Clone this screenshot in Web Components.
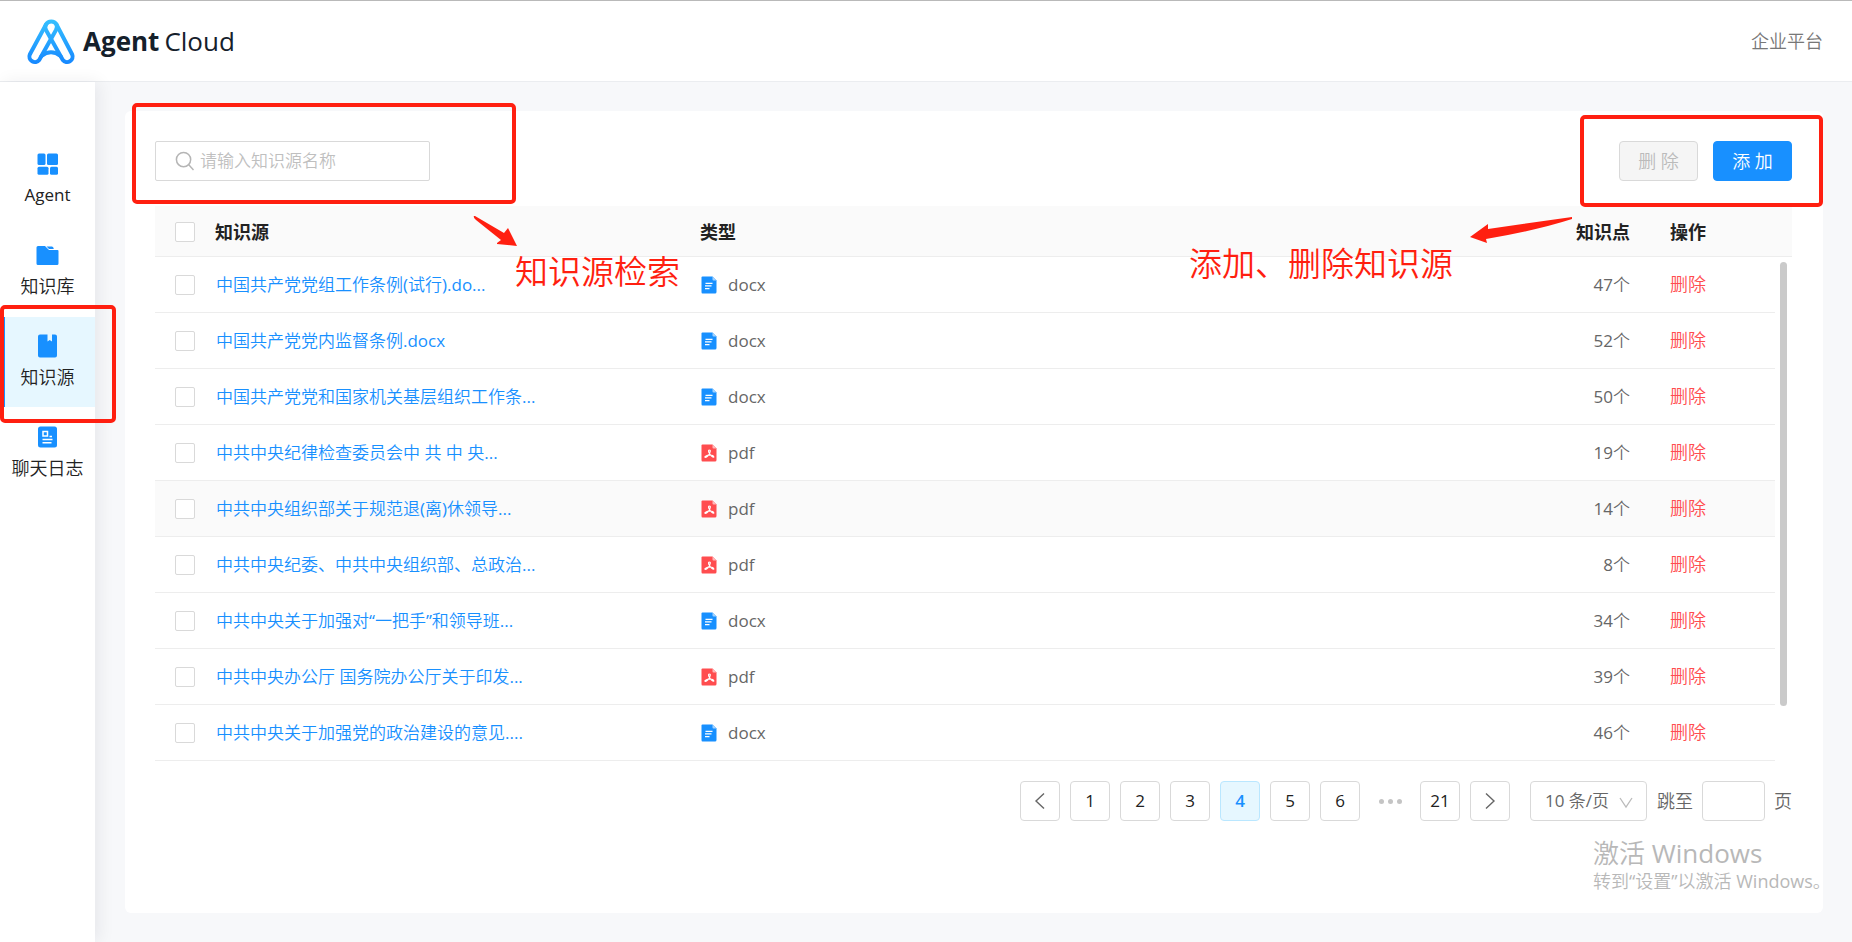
<!DOCTYPE html>
<html lang="zh-CN">
<head>
<meta charset="utf-8">
<title>Agent Cloud</title>
<style>
html, body { height: 100%; margin: 0; }
body { background: #f7f8fa; color: #222; font: 17px/24px "Open Sans", "Noto Sans CJK SC DemiLight", "Noto Sans CJK SC", sans-serif; }
</style>
</head>
<body>
<cloud-app></cloud-app>
<script>
const icons = {
  agent: '<svg viewBox="0 0 24 24"><g fill="#1890ff"><rect x="1.500" y="1.500" width="8" height="11.500" rx="1.500"/><rect x="11" y="1.500" width="11" height="11.500" rx="1.500"/><rect x="1.500" y="14.800" width="11" height="8" rx="1.500"/><rect x="14" y="14.800" width="8" height="8" rx="1.500"/></g></svg>',
  library: '<svg viewBox="0 0 24 24"><path fill="#1890ff" d="M2 3H9L13 7H21.500Q22.500 7 22.500 8V20.500Q22.500 22 21 22H2Q.5 22 .5 20.500V4.500Q.5 3 2 3Z"/><path fill="#1890ff" d="M10.500 3.500H16Q17.500 3.500 17.800 6H13Z"/></svg>',
  source: '<svg viewBox="0 0 24 24"><path fill="#1890ff" d="M4 .5H11.500V7.500L13.700 6L16 7.500V.5H19Q21 .5 21 2.500V21.500Q21 23.500 19 23.500H4Q2 23.500 2 21.500V2.500Q2 .5 4 .5Z"/></svg>',
  log: '<svg viewBox="0 0 24 24"><rect x="2" y="1.500" width="19" height="21" rx="2.500" fill="#1890ff"/><rect x="7" y="6.500" width="4.500" height="4.500" fill="none" stroke="#fff" stroke-width="1.500"/><path stroke="#fff" stroke-width="1.500" d="M13.500 11.500H16M6.500 14.500H16.500M6.500 17.800H15.500"/></svg>',
  docx: '<svg viewBox="0 0 16 18"><path fill="#1890ff" d="M1.500 .5H11.500L15.500 4.500V16Q15.500 17.500 14 17.500H1.500Q.5 17.500 .5 16V1.500Q.5 .5 1.500 .5Z"/><path fill="#a3d3ff" d="M11.500 .5L15.500 4.500H12.500Q11.500 4.500 11.500 3.500Z"/><path stroke="#fff" stroke-width="1.200" d="M4.500 7.300H11.500M4 9.900H10.500M4 12.600H8.500"/></svg>',
  pdf: '<svg viewBox="0 0 16 18"><path fill="#ff4d4f" d="M1.500 .5H11.500L15.500 4.500V16Q15.500 17.500 14 17.500H1.500Q.5 17.500 .5 16V1.500Q.5 .5 1.500 .5Z"/><path fill="#ffb8b9" d="M11.500 .5L15.500 4.500H12.500Q11.500 4.500 11.500 3.500Z"/><path fill="none" stroke="#fff" stroke-width="1.200" d="M8.500 9.500C7 7 7.500 5.800 8.500 6C10 6.200 9 8.500 8.300 10C7.300 12 5 13.700 4 13.200C3.300 12.500 6 11.300 8 11.200C10.500 11 12.500 12 12.800 13C12 13.500 9.700 12 8.500 9.500Z"/></svg>',
  search: '<svg viewBox="0 0 20 20" fill="none" stroke="#b5b5b5" stroke-width="1.600"><circle cx="9" cy="8.500" r="7.500"/><path d="M14.500 14L19.500 19.500"/></svg>',
  prev: '<svg viewBox="0 0 16 16" fill="none" stroke="#666" stroke-width="1.400"><path d="M12 .5L4 8L12 15.500"/></svg>',
  next: '<svg viewBox="0 0 16 16" fill="none" stroke="#666" stroke-width="1.400"><path d="M4 .5L12 8L4 15.500"/></svg>',
  down: '<svg viewBox="0 0 16 16" fill="none" stroke="#bbb" stroke-width="1.300"><path d="M2 4L8 13L14 4"/></svg>'
};

class Base extends HTMLElement {
  connectedCallback() {
    if (this.shadowRoot) return;
    this.attachShadow({ mode: 'open' }).innerHTML =
      `<style>*{box-sizing:border-box}svg{display:block}a{text-decoration:none}button,input,select{font:inherit;margin:0}${this.css()}</style>${this.html()}`;
  }
}

customElements.define('cloud-header', class extends Base {
  css() { return `
    :host{display:flex;align-items:center;justify-content:space-between;box-sizing:border-box;height:82px;padding:0 29px 0 26px;background:#fff;border-top:1px solid #b9b9b9;border-bottom:1px solid #ebedf0}
    .brand{display:flex;align-items:center;gap:7px;color:#15202b;font-size:26px;line-height:40px}
    .brand svg{width:50px;height:48px}
    .name{display:flex;gap:5px}
    .portal{color:#777;font-size:18px}`; }
  html() { return `
    <a class="brand" href="#"><svg viewBox="0 0 50 48" fill="none" stroke="url(#g)" stroke-width="4" stroke-linejoin="round" stroke-linecap="round"><defs><linearGradient id="g" gradientUnits="userSpaceOnUse" x1="0" y1="2" x2="0" y2="47"><stop offset="0" stop-color="#36c1ff"/><stop offset="1" stop-color="#1688ff"/></linearGradient></defs>
    <path d="M30.500 7.500A6 6 0 0 0 20 7.500L3.800 37.500A5.500 5.500 0 0 0 13.200 43L30 13Q31.500 10 30.500 7.500"/><path d="M20 13L36.800 43A5.500 5.500 0 0 0 46.200 37.500L30.500 7.500M20 7.500Q18.500 10 20 13"/><path d="M15.500 39Q25 31.500 34.500 39"/></svg><span class="name"><b>Agent</b><span>Cloud</span></span></a>
    <a class="portal" href="#">企业平台</a>`; }
});

customElements.define('nav-item', class extends Base {
  css() { return `
    :host{display:block}
    a{display:flex;flex-direction:column;align-items:center;gap:7px;height:90px;padding-top:17px;color:#222;font-size:18px;white-space:nowrap}
    svg{width:24px;height:24px}
    :host([active]) a{background:linear-gradient(90deg,#1890ff 5px,#e6f7ff 5px)}
    ::slotted(*){font-size:17px}`; }
  html() { return `<a href="#">${icons[this.getAttribute('icon')]}<slot></slot></a>`; }
});

customElements.define('side-nav', class extends Base {
  css() { return `
    :host{display:block;background:#fff;box-shadow:4px 0 16px rgba(0,21,41,.07)}
    nav{display:grid;gap:1px;padding-top:53px}`; }
  html() { return `<nav><nav-item icon="agent"><span>Agent</span></nav-item><nav-item icon="library">知识库</nav-item><nav-item icon="source" active>知识源</nav-item><nav-item icon="log">聊天日志</nav-item></nav>`; }
});

customElements.define('source-toolbar', class extends Base {
  css() { return `
    :host{display:flex;justify-content:space-between;align-items:center}
    label{display:flex;align-items:center;gap:6px;width:275px;height:40px;padding:0 19px;border:1px solid #d9d9d9;border-radius:2px;background:#fff}
    label svg{width:19px;height:20px;flex:none}
    input{min-width:0;width:100%;border:0;padding:0;outline:0;background:none}
    input::placeholder{color:#bfbfbf}
    .actions{display:flex;gap:15px}
    button{width:79px;height:40px;padding:0;border:1px solid #1890ff;border-radius:4px;background:#1890ff;color:#fff;font-size:18px}
    button:disabled{border-color:#d9d9d9;background:#f5f5f5;color:#bbb}`; }
  html() { return `<label>${icons.search}<input type="text" placeholder="请输入知识源名称" aria-label="知识源名称"></label>
    <div class="actions"><button disabled>删 除</button><button>添 加</button></div>`; }
});

const rows = [
  ['中国共产党党组工作条例(试行).do...', 'docx', 47],
  ['中国共产党党内监督条例.docx', 'docx', 52],
  ['中国共产党党和国家机关基层组织工作条...', 'docx', 50],
  ['中共中央纪律检查委员会中 共 中 央...', 'pdf', 19],
  ['中共中央组织部关于规范退(离)休领导...', 'pdf', 14],
  ['中共中央纪委、中共中央组织部、总政治...', 'pdf', 8],
  ['中共中央关于加强对“一把手”和领导班...', 'docx', 34],
  ['中共中央办公厅 国务院办公厅关于印发...', 'pdf', 39],
  ['中共中央关于加强党的政治建设的意见....', 'docx', 46]
];

customElements.define('source-table', class extends Base {
  css() { return `
    :host{display:grid;grid-template-columns:1fr 17px}
    table{width:100%;border-collapse:separate;border-spacing:0;table-layout:fixed}
    th,td{padding:0;border-bottom:1px solid #ededed;text-align:left;font-weight:400;white-space:nowrap}
    th{height:51px;padding-top:1px;background:#fafafa;font-weight:700;font-size:18px;font-family:"Open Sans","Noto Sans CJK SC",sans-serif}
    td{height:56px;color:#666}
    .pick{width:60px;padding-left:20px}.name{width:485px}.points{width:120px;text-align:right}.act{width:145px;padding-left:40px}
    td.name{padding-left:1px}
    td a{color:#1890ff}
    .act a{color:#ff4d4f;font-size:18px}
    tr.hover td{background:#fafafa}
    input{appearance:none;display:block;width:20px;height:20px;border:1px solid #d9d9d9;border-radius:2px;background:#fff}
    .kind{display:flex;align-items:center;gap:11px;padding-left:1px}
    .kind svg{width:16px;height:18px}
    .rail{display:grid;grid-template-rows:51px 1fr}
    .rail i:first-child{background:#fafafa;border-bottom:1px solid #ededed}
    .thumb{width:7px;height:444px;margin:5px 0 0 5px;border-radius:4px;background:#cacaca}`; }
  html() { return `<table><thead><tr><th class="pick"><input type="checkbox" aria-label="全选"></th><th class="name">知识源</th><th>类型</th><th class="points">知识点</th><th class="act">操作</th></tr></thead>
    <tbody>${rows.map(([n, k, p], i) => `<tr${i === 4 ? ' class="hover"' : ''}><td class="pick"><input type="checkbox" aria-label="${n}"></td><td class="name"><a href="#">${n}</a></td><td><span class="kind">${icons[k]}${k}</span></td><td class="points">${p}个</td><td class="act"><a href="#">删除</a></td></tr>`).join('')}</tbody></table>
    <div class="rail"><i></i><i class="thumb"></i></div>`; }
});

customElements.define('page-bar', class extends Base {
  css() { return `
    :host{display:flex;justify-content:flex-end;align-items:center;gap:10px;color:#666}
    button{display:grid;place-items:center;width:40px;height:40px;padding:0;border:1px solid #d9d9d9;border-radius:4px;background:#fff;color:#222}
    button svg,.size svg{width:16px;height:16px}
    button[aria-current]{border-color:#bae7ff;background:#e6f7ff;color:#1890ff;font-weight:600}
    .more{display:flex;justify-content:center;gap:4px;width:40px}
    .more i{width:5px;height:5px;border-radius:50%;background:#c4c4c4}
    .size{position:relative;margin-left:10px}
    select{appearance:none;display:block;width:117px;height:40px;padding:0 0 0 14px;border:1px solid #d9d9d9;border-radius:4px;background:#fff;color:#666}
    .size svg{position:absolute;right:13px;top:13px}
    label{display:flex;align-items:center;gap:9px;font-size:18px}
    label input{width:63px;height:40px;border:1px solid #d9d9d9;border-radius:4px}`; }
  html() { return `<button aria-label="上一页">${icons.prev}</button>${[1,2,3,4,5,6].map(n => `<button${n === 4 ? ' aria-current="page"' : ''}>${n}</button>`).join('')}<span class="more"><i></i><i></i><i></i></span><button>21</button><button aria-label="下一页">${icons.next}</button>
    <span class="size"><select aria-label="每页条数"><option>10 条/页</option></select>${icons.down}</span><label>跳至<input type="text">页</label>`; }
});

customElements.define('mark-box', class extends Base {
  css() { return `:host{position:absolute;box-sizing:border-box;border:4px solid #ff1f10;border-radius:5px;pointer-events:none}`; }
  html() { return ''; }
});

customElements.define('mark-note', class extends Base {
  css() { return `:host{position:absolute;color:#ff1f10;font-size:33px;line-height:40px;white-space:nowrap}`; }
  html() { return '<slot></slot>'; }
});

customElements.define('cloud-app', class extends Base {
  css() { return `
    :host{display:grid;grid-template:auto 1fr / 95px 1fr;min-height:100%;position:relative;overflow:hidden}
    cloud-header{grid-column:1/-1}
    main{padding:29px 29px 29px 30px}
    .card{display:flex;flex-direction:column;min-height:100%;box-sizing:border-box;padding:30px 31px 30px 30px;background:#fff;border-radius:6px}
    source-table{margin:25px 0 20px}
    .arrow{position:absolute;fill:#ff1f10}
    .a1{left:470px;top:212px;width:50px;height:36px}
    .a2{right:276px;top:212px;width:108px;height:34px}
    .b1{left:132px;top:103px;width:384px;height:101px}
    .b2{right:29px;top:115px;width:243px;height:92px}
    .b3{left:0;top:305px;width:116px;height:118px}
    .n1{left:515px;top:252px}
    .n2{right:399px;top:244px}
    .activate{position:absolute;right:22px;bottom:49px;width:237px;color:#b8b8b8;font-size:18px;white-space:nowrap}
    .activate p{margin:0}
    .activate p:first-child{font-size:26px;line-height:32px}`; }
  html() { return `<cloud-header></cloud-header><side-nav></side-nav>
    <main><div class="card"><source-toolbar></source-toolbar><source-table></source-table><page-bar></page-bar></div></main>
    <mark-box class="b1"></mark-box><mark-box class="b2"></mark-box><mark-box class="b3"></mark-box>
    <svg class="arrow a1" viewBox="0 0 50 36"><path d="M4 4Q3 5 6 8L31 28L27 31V32L47 34L38 16L34 21L5 4Z"/></svg>
    <svg class="arrow a2" viewBox="0 0 108 34"><path d="M104 5L20 17L20 12L2 25L19 31L18 27Q70 18 104 7Z"/></svg>
    <mark-note class="n1">知识源检索</mark-note><mark-note class="n2">添加、删除知识源</mark-note>
    <aside class="activate"><p>激活 Windows</p><p>转到“设置”以激活 Windows。</p></aside>`; }
});
</script>
</body>
</html>
